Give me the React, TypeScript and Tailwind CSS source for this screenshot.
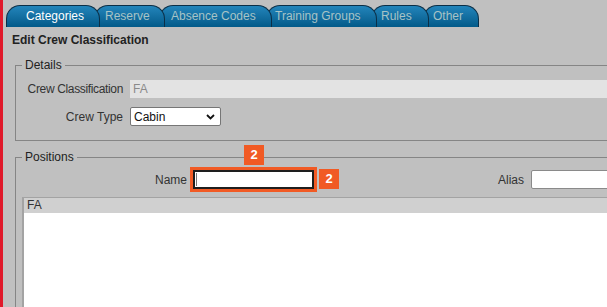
import React from 'react'

type Tab = { label: string; width: number; pl: number; active?: boolean }

const TABS: Tab[] = [
  { label: 'Categories', width: 94, pl: 19, active: true },
  { label: 'Reserve', width: 71, pl: 10 },
  { label: 'Absence Codes', width: 113, pl: 11 },
  { label: 'Training Groups', width: 111, pl: 8 },
  { label: 'Rules', width: 58, pl: 9 },
  { label: 'Other', width: 56, pl: 9 },
]

const Z = ['z-[6]', 'z-[5]', 'z-[4]', 'z-[3]', 'z-[2]', 'z-[1]']

function Badge({ className }: { className: string }) {
  return (
    <div
      className={`absolute w-[20px] h-[20px] bg-[#f15a24] text-white font-bold text-[13px] leading-[20px] text-center ${className}`}
    >
      2
    </div>
  )
}

export default function App() {
  return (
    <div
      className="w-[607px] h-[307px] overflow-hidden bg-[#c0c0c0] flex text-[12px] text-[#222]"
      style={{ fontFamily: '"Liberation Sans", Arial, sans-serif' }}
    >
      {/* red edge */}
      <div className="w-[3px] shrink-0 bg-[#e0192a]" />

      <div className="flex-1 min-w-0">
        {/* tab strip */}
        <div className="flex pl-[3px] pt-[5px] h-[27px]">
          {TABS.map((t, i) => (
            <div
              key={t.label}
              className={`relative ${Z[i]} shrink-0 h-[22px] rounded-tl-[14px] rounded-tr-[14px] border border-b-0 border-[#0b2f47] bg-gradient-to-b from-[#2385bb] to-[#025a89] leading-[20px] ${i > 0 ? '-ml-[6px]' : ''} ${t.active ? 'text-white' : 'text-[#a7c3c6]'}`}
              style={{ width: t.width, paddingLeft: t.pl }}
            >
              {t.label}
            </div>
          ))}
        </div>

        <div className="pl-[9px] pt-[6px] font-bold leading-[14px]">Edit Crew Classification</div>

        {/* details */}
        <fieldset className="ml-[12px] mt-[11px] w-[640px] border border-[#858585] pl-[6px] pt-[8px] pb-[14px]">
          <legend className="px-[3px] leading-[14px]">Details</legend>
          <div className="pl-[3px] grid grid-cols-[98px_1fr] gap-x-[7px] gap-y-[9px] items-center">
            <div className="text-right text-[#333] whitespace-nowrap tracking-[-0.35px]">Crew Classification</div>
            <div className="h-[18px] bg-[#e3e3e3] pl-[3px] leading-[18px] text-[#8a8a8a]">FA</div>
            <div className="text-right text-[#333]">Crew Type</div>
            <div>
              <div className="w-[91px] h-[19px] bg-white border border-[#767676] rounded-[2px] flex items-center justify-between pl-[3px] pr-[5px] text-[#111]">
                <span>Cabin</span>
                <svg width="9" height="6" viewBox="0 0 9 6">
                  <path d="M1 1 L4.5 4.5 L8 1" fill="none" stroke="#111" strokeWidth="1.8" />
                </svg>
              </div>
            </div>
          </div>
        </fieldset>

        {/* positions */}
        <fieldset className="ml-[12px] mt-[9px] w-[640px] border border-[#858585] pl-[6px] pt-[6px]">
          <legend className="px-[3px] leading-[14px]">Positions</legend>
          <div className="pl-[3px] flex items-center h-[19px]">
            <div className="w-[162px] text-right text-[#333]">Name</div>
            <div className="relative ml-[6px] w-[121px] h-[19px] bg-white border-2 border-[#1e1e1e] outline-[3px] outline-solid outline-[#f15a24]">
              <div className="absolute left-[1px] top-[1px] w-[1px] h-[13px] bg-[#777]" />
              <Badge className="left-[49px] -top-[27px]" />
              <Badge className="left-[124px] -top-[3px]" />
            </div>
            <div className="w-[210px] text-right text-[#333]">Alias</div>
            <div className="ml-[7px] w-[150px] h-[19px] bg-white border border-[#8a8a8a] rounded-[2px]" />
          </div>
          <div className="mt-[8px] h-[140px] border-l-2 border-t border-[#a3a3a3] bg-white">
            <div className="h-[15px] bg-[#d0d0d0] pl-[3px] leading-[15px] text-[#333]">FA</div>
          </div>
        </fieldset>
      </div>
    </div>
  )
}
